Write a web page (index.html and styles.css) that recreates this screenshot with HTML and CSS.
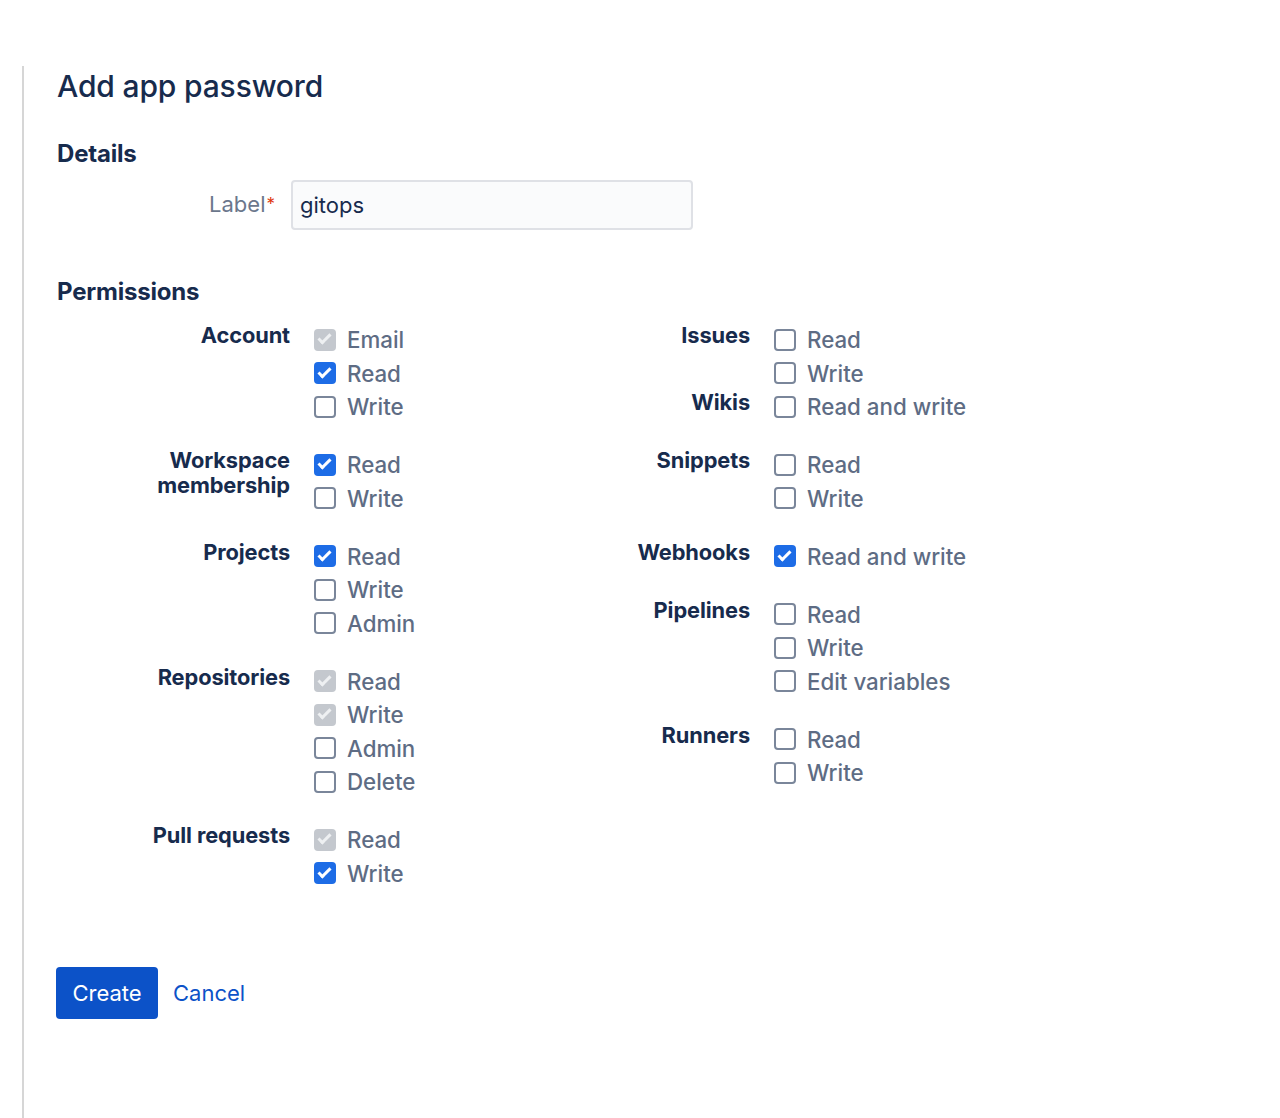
FILE: index.html
```html
<!DOCTYPE html>
<html lang="en">
<head>
<meta charset="utf-8">
<title>Add app password</title>
<link rel="stylesheet" href="styles.css">
</head>
<body>
<div class="page">
  <h1 class="title">Add app password</h1>

  <h2 class="section-title">Details</h2>
  <div class="field-row">
    <label class="field-label" for="label">Label<span class="req">*</span></label>
    <input class="text-input" id="label" type="text" value="gitops">
  </div>

  <h2 class="section-title perm-title">Permissions</h2>
  <div class="perm-grid">
    <div class="perm-col">
      <div class="group">
        <div class="group-label">Account</div>
        <div class="options">
          <div class="opt"><span class="cb cb-disabled"></span>Email</div>
          <div class="opt"><span class="cb cb-checked"></span>Read</div>
          <div class="opt"><span class="cb"></span>Write</div>
        </div>
      </div>
      <div class="group">
        <div class="group-label">Workspace membership</div>
        <div class="options">
          <div class="opt"><span class="cb cb-checked"></span>Read</div>
          <div class="opt"><span class="cb"></span>Write</div>
        </div>
      </div>
      <div class="group">
        <div class="group-label">Projects</div>
        <div class="options">
          <div class="opt"><span class="cb cb-checked"></span>Read</div>
          <div class="opt"><span class="cb"></span>Write</div>
          <div class="opt"><span class="cb"></span>Admin</div>
        </div>
      </div>
      <div class="group">
        <div class="group-label">Repositories</div>
        <div class="options">
          <div class="opt"><span class="cb cb-disabled"></span>Read</div>
          <div class="opt"><span class="cb cb-disabled"></span>Write</div>
          <div class="opt"><span class="cb"></span>Admin</div>
          <div class="opt"><span class="cb"></span>Delete</div>
        </div>
      </div>
      <div class="group">
        <div class="group-label">Pull requests</div>
        <div class="options">
          <div class="opt"><span class="cb cb-disabled"></span>Read</div>
          <div class="opt"><span class="cb cb-checked"></span>Write</div>
        </div>
      </div>
    </div>

    <div class="perm-col">
      <div class="group group-tight">
        <div class="group-label">Issues</div>
        <div class="options">
          <div class="opt"><span class="cb"></span>Read</div>
          <div class="opt"><span class="cb"></span>Write</div>
        </div>
      </div>
      <div class="group">
        <div class="group-label">Wikis</div>
        <div class="options">
          <div class="opt"><span class="cb"></span>Read and write</div>
        </div>
      </div>
      <div class="group">
        <div class="group-label">Snippets</div>
        <div class="options">
          <div class="opt"><span class="cb"></span>Read</div>
          <div class="opt"><span class="cb"></span>Write</div>
        </div>
      </div>
      <div class="group">
        <div class="group-label">Webhooks</div>
        <div class="options">
          <div class="opt"><span class="cb cb-checked"></span>Read and write</div>
        </div>
      </div>
      <div class="group">
        <div class="group-label">Pipelines</div>
        <div class="options">
          <div class="opt"><span class="cb"></span>Read</div>
          <div class="opt"><span class="cb"></span>Write</div>
          <div class="opt"><span class="cb"></span>Edit variables</div>
        </div>
      </div>
      <div class="group">
        <div class="group-label">Runners</div>
        <div class="options">
          <div class="opt"><span class="cb"></span>Read</div>
          <div class="opt"><span class="cb"></span>Write</div>
        </div>
      </div>
    </div>
  </div>

  <div class="actions">
    <button class="btn-primary" type="button">Create</button>
    <a class="link" href="#">Cancel</a>
  </div>
</div>
</body>
</html>
```

FILE: styles.css
```css
html, body {
  margin: 0;
  padding: 0;
  background: #ffffff;
}

body {
  font-family: Inter, "Noto Sans", "Liberation Sans", sans-serif;
  color: #172B4D;
  height: 1118px;
  overflow: hidden;
}

.page {
  margin-top: 66px;
  margin-left: 22px;
  border-left: 2px solid #d6d6d6;
  padding-left: 33px;
  min-height: 1052px;
  box-sizing: border-box;
  padding-top: 1px;
}

.title {
  font-size: 30px;
  font-weight: 500;
  line-height: 36px;
  margin: 1px 0 0 0;
  letter-spacing: -0.15px;
  color: #172B4D;
}

.section-title {
  font-size: 24px;
  font-weight: 700;
  line-height: 28px;
  margin: 36px 0 0 0;
  color: #172B4D;
  letter-spacing: -0.2px;
}

.perm-title {
  margin-top: 48px;
}

.field-row {
  display: flex;
  align-items: center;
  margin-top: 12px;
}

.field-label {
  width: 218px;
  text-align: right;
  padding-right: 16px;
  box-sizing: content-box;
  font-size: 22px;
  color: #6B778C;
  line-height: 25px;
  margin-bottom: 2px;
}

.req {
  color: #DE350B;
  font-size: 17px;
  vertical-align: top;
  margin-left: 1px;
}

.text-input {
  width: 402px;
  height: 50px;
  box-sizing: border-box;
  border: 2px solid #DFE1E6;
  border-radius: 4px;
  background: #FAFBFC;
  font-family: inherit;
  font-size: 22px;
  color: #172B4D;
  padding: 0 7px;
  margin: 0;
  outline: none;
}

.perm-grid {
  display: grid;
  grid-template-columns: 460px 460px;
  margin-top: 17px;
}

.group {
  display: flex;
  gap: 24px;
  margin-bottom: 24.5px;
}

.group-tight {
  margin-bottom: 0;
}

.group-label {
  width: 233px;
  flex: none;
  text-align: right;
  font-size: 21.8px;
  font-weight: 700;
  line-height: 25px;
  color: #172B4D;
  letter-spacing: -0.1px;
}

.options {
  display: flex;
  flex-direction: column;
}

.opt {
  display: flex;
  align-items: center;
  height: 33.5px;
  font-size: 22.3px;
  color: #5E6C84;
  font-weight: 500;
  white-space: nowrap;
}

.cb {
  width: 22px;
  height: 22px;
  box-sizing: border-box;
  border: 2px solid #7A869A;
  border-radius: 4px;
  margin-right: 11px;
  flex: none;
  position: relative;
  background: #ffffff;
}

.cb-checked,
.cb-disabled {
  border: none;
}

.cb-checked {
  background: #1D6CE6;
}

.cb-disabled {
  background: #C4C8CE;
}

.cb-checked::after,
.cb-disabled::after {
  content: "";
  position: absolute;
  left: 7px;
  top: 2.5px;
  width: 7px;
  height: 13px;
  border-right: 3px solid #ffffff;
  border-bottom: 3px solid #ffffff;
  transform: rotate(45deg);
  box-sizing: border-box;
}

.cb-disabled::after {
  border-color: #EEF0F2;
}

.actions {
  display: flex;
  align-items: center;
  gap: 15px;
  margin-top: 52px;
}

.btn-primary {
  height: 52px;
  width: 102px;
  background: #0C52C8;
  color: #ffffff;
  border: none;
  border-radius: 4px;
  font-family: inherit;
  font-size: 22px;
  font-weight: 400;
  padding: 0;
  margin-left: -1px;
  cursor: pointer;
}

.link {
  color: #0C52C8;
  font-size: 22px;
  text-decoration: none;
}
```
